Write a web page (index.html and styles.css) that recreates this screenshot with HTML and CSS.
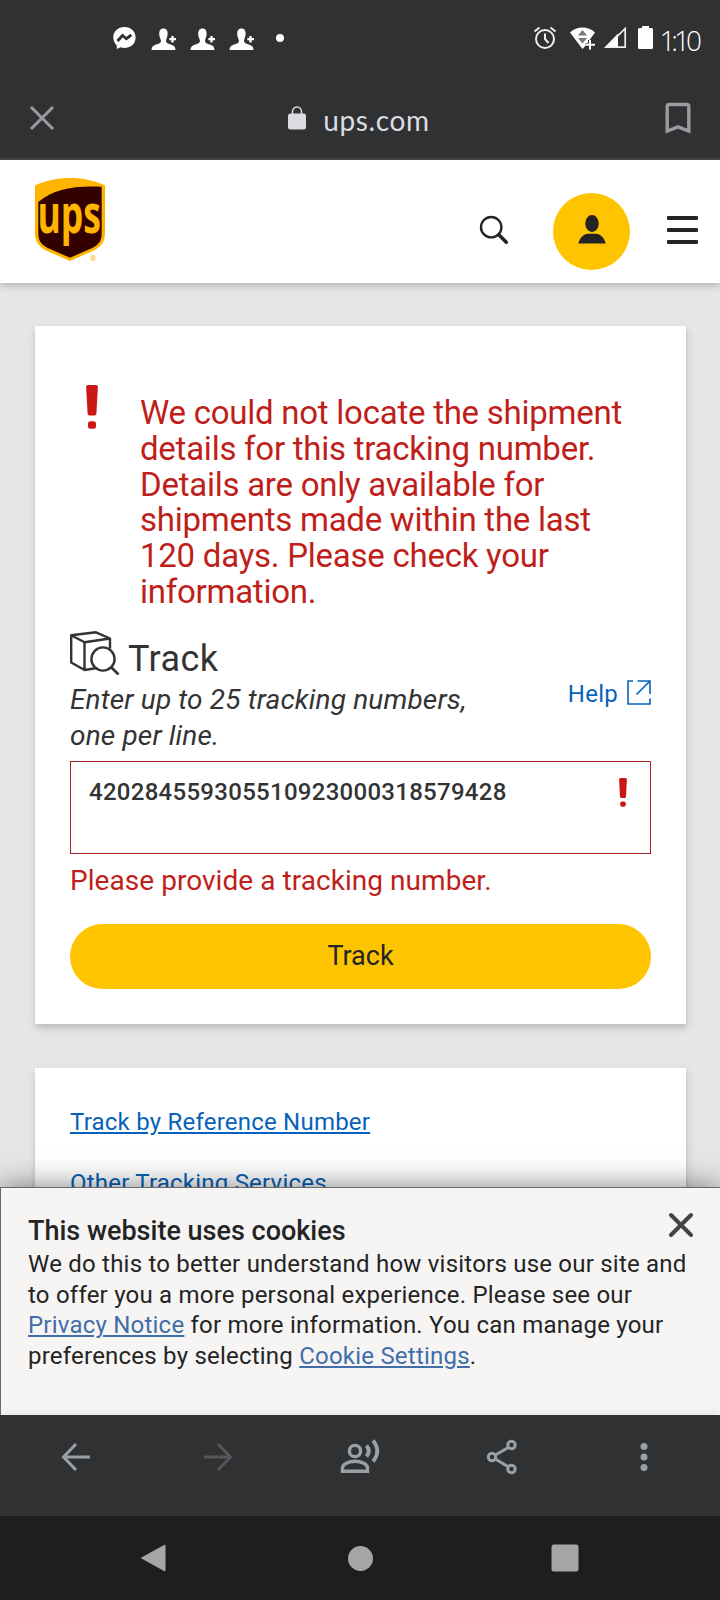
FILE: index.html
```html
<!DOCTYPE html>
<html lang="en">
<head>
    <meta charset="UTF-8">
    <meta name="viewport" content="width=device-width, initial-scale=1.0">
    <title>Tracking | UPS</title>
    <link rel="stylesheet" href="styles.css">
</head>
<body>
<div class="screen">
    <div class="status-bar">
        <div class="notifications">
            <svg width="25" height="24" viewBox="0 0 25 24">
                <path d="M12.500 1C6 1 1.300 5.500 1.300 11.500c0 3.300 1.300 5.800 3.400 7.700V23l3.800-1.700c1.300.4 2.600.6 4 .6 6.400 0 11.100-4.400 11.100-10.400S18.900 1 12.500 1z" fill="#fff"/>
                <path d="M5.500 15l5-5.500 3.800 3.200 5-3.700" fill="none" stroke="#303133" stroke-width="2.800"/>
            </svg>
            <svg width="25" height="24" viewBox="0 0 25 24"><use href="#person-add"/></svg>
            <svg width="25" height="24" viewBox="0 0 25 24"><use href="#person-add"/></svg>
            <svg width="25" height="24" viewBox="0 0 25 24"><use href="#person-add"/></svg>
            <span class="dot"></span>
        </div>
        <div class="system-icons">
            <svg width="24" height="24" viewBox="0 0 24 24" fill="none" stroke="#eee" stroke-width="2">
                <circle cx="12" cy="13" r="9"/>
                <path d="M12 7.500V13l3.500 4M1.500 5.500L6.500 1.500M22.500 5.500L17.500 1.500"/>
            </svg>
            <svg class="wifi" width="27" height="24" viewBox="0 0 27 24">
                <path d="M1 6.500C8-.3 19-.3 26 6.500l-5.500 7.500h-1.500v3l-5.500 6z" fill="#fff"/>
                <path d="M9 9.500l4.500-5.500L18 9.500zM9 12h9l-4.500 5.500z" fill="#77797b"/>
                <path d="M21 14v9.500M16.500 18.700H26" stroke="#303133" stroke-width="3"/>
                <path d="M21 14v9.500M16.500 18.700H26" stroke="#fff" stroke-width="2"/>
            </svg>
            <svg class="signal" width="23" height="24" viewBox="0 0 23 24">
                <path d="M0 22L14 7.500V22z" fill="#fff"/>
                <path d="M2.500 21.200L21.200 2.500v18.700z" fill="none" stroke="#eee" stroke-width="1.700"/>
            </svg>
            <svg class="battery" width="15" height="24" viewBox="0 0 15 24">
                <path d="M4 2V0h7v2h2.500q1.500 0 1.500 1.500v18q0 1.500-1.500 1.500h-12Q0 23 0 21.500v-18Q0 2 1.500 2z" fill="#fff"/>
            </svg>
            <span class="time">1:10</span>
        </div>
    </div>

    <div class="browser-bar">
        <svg width="26" height="26" viewBox="0 0 26 26"><path d="M2 2l22 22M24 2L2 24" stroke="#9a9ca0" stroke-width="3"/></svg>
        <div class="address">
            <svg width="18" height="24" viewBox="0 0 18 24">
                <path d="M4.500 9V5.500a4.500 4.500 0 0 1 9 0V9" fill="none" stroke="#dadce0" stroke-width="1.500"/>
                <rect y="7.500" width="18" height="16" rx="2.500" fill="#dadce0"/>
            </svg>
            <span>ups.com</span>
        </div>
        <svg width="26" height="32" viewBox="0 0 26 32"><path d="M2.200 29V4.500q0-2 2-2h17.600q2 0 2 2V29L13 24.800z" fill="none" stroke="#9a9ca0" stroke-width="3.400"/></svg>
    </div>

    <div class="webview">
        <header>
            <svg class="logo" width="72" height="88" viewBox="0 0 72 88">
                <path d="M0 7.500C20-2.500 50-2.500 70 7.500V55c0 8-3 13-11 17.500L35 83 11 72.500C3 68 0 63 0 55z" fill="#ffb500"/>
                <path d="M3.300 24C19 11 38 7.500 66.700 8.700V55c0 7-2 11-9.500 15L35 79.800 12.800 70C5.300 66 3.300 62 3.300 55z" fill="#330000"/>
                <text class="logo-text" x="2.500" y="55" textLength="63.500" lengthAdjust="spacingAndGlyphs">ups</text>
                <text class="logo-mark" x="55" y="83">®</text>
            </svg>
            <svg class="search" width="30" height="30" viewBox="0 0 30 30" fill="none" stroke="#242424" stroke-linecap="round">
                <circle cx="12.200" cy="12.200" r="10.200" stroke-width="2.400"/>
                <path d="M19.800 19.800l7.500 7.500" stroke-width="3.500"/>
            </svg>
            <div class="profile">
                <svg width="28" height="29" viewBox="0 0 28 29" fill="#242424">
                    <ellipse cx="14" cy="8.500" rx="6.700" ry="8.500"/>
                    <path d="M.3 28.500C2 22 6 18.700 10.500 18.700h7c4.500 0 8.500 3.300 10.200 9.800z"/>
                </svg>
            </div>
            <div class="menu"><span></span><span></span><span></span></div>
        </header>

        <main>
            <section class="card track-card">
                <div class="alert">
                    <svg width="12" height="44" viewBox="0 0 12 44" fill="#cc1815">
                        <path d="M2 0h8q2 0 1.900 2l-1.500 26.500q-.1 1.900-1.900 1.900h-5q-1.800 0-1.900-1.900L.1 2Q0 0 2 0z"/>
                        <rect x="2" y="36.300" width="8" height="7.400" rx="2.500"/>
                    </svg>
                    <p>We could not locate the shipment details for this tracking number. Details are only available for shipments made within the last 120 days. Please check your information.</p>
                </div>
                <div class="track-title">
                    <svg width="50" height="44" viewBox="0 0 50 44" fill="none" stroke="#333" stroke-width="2.400" stroke-linejoin="round">
                        <path d="M1.200 4.300L26 1.300l14 6.200L14.500 11.200zM1.200 4.300v27.200L14.500 39V11.200M14.500 39l11-1.700M40 7.500v10"/>
                        <circle cx="33" cy="28" r="11.600" fill="#fff"/>
                        <path d="M41.500 36.500l7 7" stroke-width="2.700"/>
                    </svg>
                    <h2>Track</h2>
                </div>
                <div class="hint-row">
                    <p class="hint">Enter up to 25 tracking numbers, one per line.</p>
                    <a class="help" href="#">Help
                        <svg width="24" height="25" viewBox="0 0 24 25" fill="none" stroke="#0662bb" stroke-width="1.600">
                            <path d="M6 1H1v23h22v-5.500M10.500 1H23v13M23 1L9.500 14.500"/>
                        </svg>
                    </a>
                </div>
                <div class="tracking-input">
                    <span>420284559305510923000318579428</span>
                    <svg width="8" height="30" viewBox="0 0 8 30" fill="#cc1815">
                        <path d="M1.500 0h5Q8 0 7.900 1.500L7 18.700q-.1 1.300-1.400 1.300H2.400q-1.300 0-1.400-1.300L.1 1.500Q0 0 1.500 0z"/>
                        <rect x="1.200" y="23.500" width="5.600" height="5.300" rx="2"/>
                    </svg>
                </div>
                <p class="error">Please provide a tracking number.</p>
                <button class="track-btn">Track</button>
            </section>

            <section class="card links-card">
                <a href="#">Track by Reference Number</a>
                <a href="#">Other Tracking Services</a>
            </section>
        </main>

        <div class="cookies">
            <svg class="cookies-close" width="26" height="26" viewBox="0 0 26 26"><path d="M3 3l20 20M23 3L3 23" stroke="#444" stroke-width="4" stroke-linecap="round"/></svg>
            <h3>This website uses cookies</h3>
            <p>We do this to better understand how visitors use our site and to offer you a more personal experience. Please see our <a href="#">Privacy Notice</a> for more information. You can manage your preferences by selecting <a href="#">Cookie Settings</a>.</p>
        </div>
    </div>

    <div class="toolbar">
        <svg width="40" height="40" viewBox="0 0 40 40" fill="none" stroke="#9aa0a6" stroke-width="3"><path d="M34 20H8M20 7L7.500 20 20 33"/></svg>
        <svg width="40" height="40" viewBox="0 0 40 40" fill="none" stroke="#55585b" stroke-width="3"><path d="M6 20h26M20 7l12.500 13L20 33"/></svg>
        <svg width="40" height="40" viewBox="0 0 40 40" fill="none" stroke="#9aa0a6" stroke-width="3.400">
            <circle cx="15" cy="14" r="5.600"/>
            <path d="M2.500 34.300V31c0-4 6-6.700 12.500-6.700S27.500 27 27.500 31v3.300z"/>
            <path d="M26.500 8.500q4.500 5.500 0 11" stroke-width="4"/>
            <path d="M33 3.500q8.500 10.500 0 21" stroke-width="3.800"/>
        </svg>
        <svg width="40" height="40" viewBox="0 0 40 40" fill="none" stroke="#9aa0a6" stroke-width="3">
            <path d="M10 20L29.500 8.500M10 20l19.500 11.700"/>
            <g fill="#303133"><circle cx="10" cy="20" r="3.700"/><circle cx="29.500" cy="8" r="3.700"/><circle cx="29.500" cy="32" r="3.700"/></g>
        </svg>
        <svg width="40" height="40" viewBox="0 0 40 40" fill="#9aa0a6"><circle cx="20" cy="9.500" r="3.500"/><circle cx="20" cy="20" r="3.500"/><circle cx="20" cy="30.500" r="3.500"/></svg>
    </div>

    <div class="nav-bar">
        <svg width="30" height="30" viewBox="0 0 30 30" fill="#a5a5a5"><path d="M26 2v26L2.500 15z" stroke="#a5a5a5" stroke-linejoin="round"/></svg>
        <svg width="30" height="30" viewBox="0 0 30 30" fill="#a5a5a5"><circle cx="15.500" cy="15.500" r="12.500"/></svg>
        <svg width="30" height="30" viewBox="0 0 30 30" fill="#a5a5a5"><rect x="1.500" y="1.500" width="27" height="27" rx="2.500"/></svg>
    </div>
</div>

<svg width="0" height="0" class="sprite">
    <symbol id="person-add" viewBox="0 0 25 24">
        <path d="M12.500 2.500c3.500 0 4.500 3 4 6.500-.3 2.500-1.300 4-1.500 6 0 2 3 3 6 4 2.500.8 3.500 2 3.500 6H.5c0-4 1-5 3.500-6 3-1 6-2 6-4-.2-2-1.500-3.500-1.700-6-.4-3.500.7-6.500 4.200-6.500z" fill="#fff"/>
        <path d="M21.500 10v6.500M18.300 13.200H25" stroke="#fff" stroke-width="2.300"/>
    </symbol>
</svg>
</body>
</html>
```
FILE: styles.css
```css
* {
    box-sizing: border-box;
}

body {
    font-family: Roboto, sans-serif;
    margin: 0;
    color: #242424;
}

h2, h3, p {
    margin: 0;
    font-weight: 400;
}

svg {
    display: block;
    flex-shrink: 0;
}

.screen {
    display: flex;
    flex-direction: column;
    width: 720px;
    height: 1600px;
    overflow: hidden;
}

.sprite {
    position: absolute;
}

/* phone status bar */
.status-bar {
    display: flex;
    justify-content: space-between;
    height: 80px;
    padding: 26px 19px 0 112px;
    background-color: #303133;
}

.notifications,
.system-icons {
    display: flex;
    height: 24px;
    align-items: center;
}

.notifications {
    gap: 14px;
}

.dot {
    width: 8px;
    height: 8px;
    margin-left: 8px;
    border-radius: 50%;
    background-color: #fff;
}

.wifi {
    margin-left: 12px;
}

.signal {
    margin-left: 8px;
}

.battery {
    margin-left: 11px;
}

.time {
    margin: 4px 3px 0 6px;
    font-family: "Open Sans", sans-serif;
    font-weight: 300;
    font-size: 28px;
    line-height: 30px;
    letter-spacing: -4px;
    color: #fff;
}

/* browser bar */
.browser-bar {
    display: flex;
    justify-content: space-between;
    align-items: center;
    height: 80px;
    padding: 0 29px 3px;
    border-bottom: 2px solid #434446;
    background-color: #303133;
}

.address {
    display: flex;
    gap: 17px;
    margin: 5px 2px 0 0;
    font-family: Lato, sans-serif;
    font-size: 28px;
    line-height: 32px;
    letter-spacing: 0.6px;
    color: #dadce0;
}

.address svg {
    margin-top: 2px;
}

.webview {
    position: relative;
    flex: 1;
    overflow: hidden;
    background-color: #e6e6e5;
}

header {
    position: relative;
    display: flex;
    height: 123px;
    padding-left: 35px;
    background-color: #fff;
    box-shadow: 0 2px 8px rgba(0, 0, 0, 0.25);
}

.logo {
    margin-top: 18px;
    overflow: visible;
}

.logo-text {
    font-family: "Open Sans", sans-serif;
    font-weight: 700;
    font-size: 54px;
    fill: #ffb500;
}

.logo-mark {
    font-size: 8px;
    fill: #ffb500;
}

.search {
    margin: 55px 0 0 372px;
}

.profile {
    display: flex;
    justify-content: center;
    align-items: center;
    width: 77px;
    height: 77px;
    margin: 33px 0 0 44px;
    padding-bottom: 4px;
    border-radius: 50%;
    background-color: #ffc400;
}

.menu {
    display: flex;
    flex-direction: column;
    gap: 8px;
    width: 31px;
    margin: 56px 0 0 37px;
}

.menu span {
    height: 4px;
    border-radius: 1px;
    background-color: #242424;
}

main {
    padding: 43px 34px 0 35px;
}

.card {
    margin-bottom: 44px;
    padding: 35px;
    background-color: #fff;
    box-shadow: 0 4px 4px rgba(0, 0, 0, 0.06), 1px 4px 9px rgba(0, 0, 0, 0.14);
}

.track-card {
    height: 698px;
}

.alert {
    display: flex;
    gap: 42px;
    padding: 24px 0 0 16px;
    color: #bf1f1b;
}

.alert p {
    flex: 1;
    margin-top: 10px;
    font-size: 33px;
    line-height: 35.8px;
    letter-spacing: -0.25px;
}

.track-title {
    display: flex;
    gap: 8px;
    height: 51px;
    margin-top: 21px;
    color: #333;
}

.track-title h2 {
    margin-top: 7px;
    font-size: 36px;
    line-height: 42px;
    letter-spacing: 0.4px;
}

.hint-row {
    display: flex;
    justify-content: space-between;
}

.hint {
    width: 420px;
    font-size: 28px;
    font-style: italic;
    line-height: 36px;
    letter-spacing: 0.16px;
    color: #333;
}

.help {
    display: flex;
    gap: 9px;
    height: 28px;
    margin-top: -2px;
    font-size: 24px;
    line-height: 28px;
    letter-spacing: 0.25px;
    color: #0662bb;
    text-decoration: none;
}

.tracking-input {
    display: flex;
    justify-content: space-between;
    height: 93px;
    margin-top: 7px;
    padding: 16px 23px 0 18px;
    border: 1px solid #a92422;
    font-size: 24px;
    font-weight: 500;
    line-height: 28px;
    letter-spacing: 0.28px;
    color: #333;
}

.error {
    margin-top: 11px;
    font-size: 28px;
    line-height: 32px;
    letter-spacing: 0.05px;
    color: #bf1f1b;
}

.track-btn {
    display: block;
    width: 100%;
    height: 65px;
    margin-top: 27px;
    padding: 0;
    border: none;
    border-radius: 33px;
    background-color: #ffc400;
    color: #242424;
    font-family: Roboto, sans-serif;
    font-size: 27px;
}

.links-card {
    display: flex;
    flex-direction: column;
    align-items: flex-start;
    gap: 33px;
    height: 300px;
    padding-top: 40px;
}

.links-card a {
    font-size: 24px;
    line-height: 28px;
    letter-spacing: 0.22px;
    color: #0662bb;
}

/* cookie banner sits over the page */
.cookies {
    position: absolute;
    left: 0;
    right: 0;
    bottom: 0;
    height: 228px;
    padding: 27px 20px 0 27px;
    border: 1px solid #696969;
    border-width: 1px 0 0 1px;
    background-color: #f6f5f4;
    box-shadow: 0 0 28px rgba(0, 0, 0, 0.5);
}

.cookies h3 {
    font-size: 27px;
    font-weight: 500;
    line-height: 32px;
}

.cookies p {
    margin-top: 2px;
    font-size: 24px;
    line-height: 30.7px;
    letter-spacing: 0.22px;
}

.cookies a {
    color: #426da9;
}

.cookies-close {
    position: absolute;
    top: 24px;
    right: 26px;
}

.toolbar {
    position: relative;
    display: flex;
    justify-content: space-between;
    height: 101px;
    padding: 22px 56px 0;
    background-color: #303133;
    box-shadow: 0 -4px 8px rgba(0, 0, 0, 0.05);
}

.nav-bar {
    position: relative;
    display: flex;
    justify-content: space-between;
    height: 84px;
    padding: 27px 140px 0 139px;
    background-color: #1e1e1f;
}
```
